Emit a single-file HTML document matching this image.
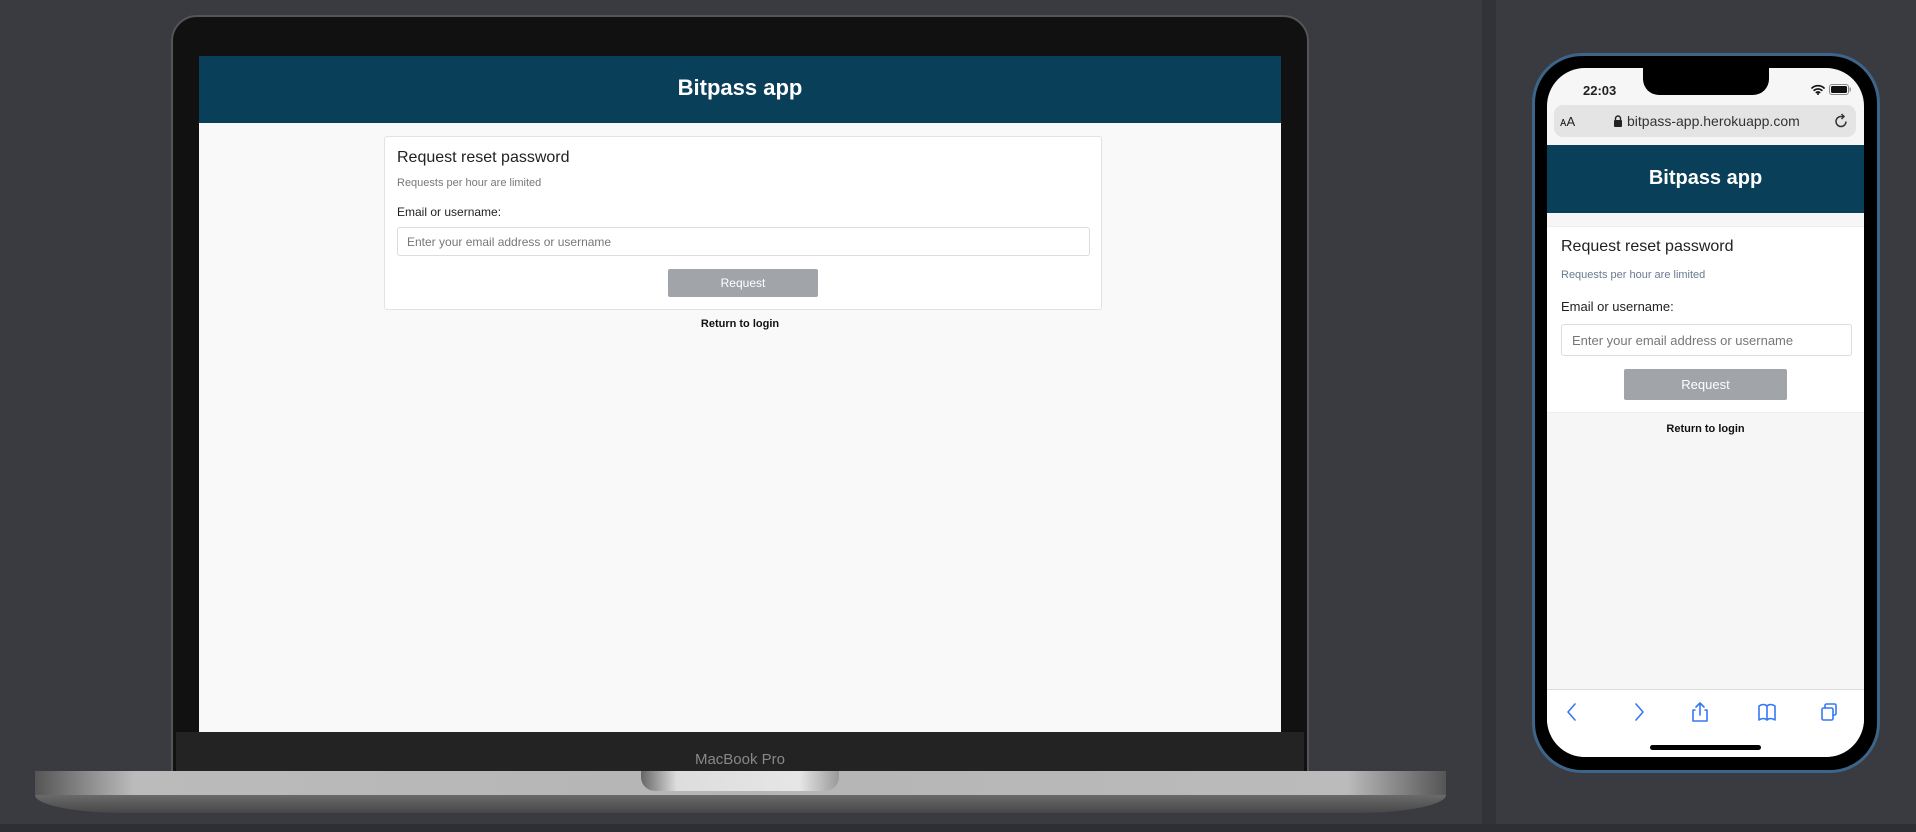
<!DOCTYPE html>
<html><head><meta charset="utf-8"><style>
*{margin:0;padding:0;box-sizing:border-box}
body{width:1916px;height:832px;background:#3a3b40;position:relative;overflow:hidden;font-family:"Liberation Sans",sans-serif}
.abs{position:absolute}
.lid{left:171px;top:15px;width:1138px;height:760px;background:#111;border:2px solid #555;border-radius:26px 26px 0 0}
.chin{left:176px;top:732px;width:1128px;height:42px;background:#232323}
.screen{left:199px;top:56px;width:1082px;height:676px;background:#f9f9f9}
.hdr{background:#0a3f5a;color:#fff;text-align:center;font-weight:600}
.card{background:#fff;border:1px solid #e3e3e3;border-radius:3px}
.t{color:#222}
.inp{border:1px solid #ddd;border-radius:3px;background:#fff;color:#777}
.btn{background:#a1a5aa;color:#fff;text-align:center;border-radius:2px}
svg{position:absolute}
</style></head><body>
<div class="abs" style="left:1482px;top:0;width:14px;height:832px;background:#323338"></div>
<div class="abs" style="left:0;top:824px;width:1916px;height:8px;background:#2e2f33"></div>

<div class="abs lid"></div>
<div class="abs chin"></div>
<div class="abs" style="left:0;top:751px;width:1480px;text-align:center;font-size:15px;color:#888">MacBook Pro</div>
<div class="abs screen">
  <div class="hdr" style="height:67px;line-height:64px;font-size:22px">Bitpass app</div>
  <div class="abs card" style="left:185px;top:80px;width:718px;height:174px">
    <div class="abs t" style="left:12px;top:12px;font-size:16px">Request reset password</div>
    <div class="abs" style="left:12px;top:40px;font-size:11px;color:#777">Requests per hour are limited</div>
    <div class="abs t" style="left:12px;top:68px;font-size:12px">Email or username:</div>
    <div class="abs inp" style="left:12px;top:90px;width:693px;height:29px;font-size:12px;padding:7px 9px">Enter your email address or username</div>
    <div class="abs btn" style="left:283px;top:132px;width:150px;height:28px;line-height:28px;font-size:12px">Request</div>
  </div>
  <div class="abs" style="left:0;top:262px;width:1082px;text-align:center;font-size:11px;font-weight:bold;color:#111">Return to login</div>
</div>
<div class="abs" style="left:35px;top:771px;width:1411px;height:24px;background:linear-gradient(90deg,#555,#bbb 7%,#b5b5b5 50%,#bbb 93%,#555)"></div>
<div class="abs" style="left:641px;top:771px;width:198px;height:20px;background:linear-gradient(90deg,#666,#ddd 18%,#e6e6e6 80%,#999);border-radius:0 0 14px 14px"></div>
<div class="abs" style="left:35px;top:795px;width:1411px;height:18px;background:linear-gradient(#6a6a6a,#474747);border-radius:0 0 90px 90px/0 0 18px 18px"></div>

<!-- phone -->
<div class="abs" style="left:1532px;top:53px;width:348px;height:720px;border-radius:50px;background:#000;border:3px solid #3d6489"></div>
<div class="abs" style="left:1547px;top:68px;width:317px;height:689px;border-radius:38px;background:#f6f6f6;overflow:hidden">
  <div class="abs" style="left:96px;top:0;width:126px;height:27px;background:#000;border-radius:0 0 16px 16px"></div>
  <div class="abs" style="left:36px;top:15px;font-size:13px;font-weight:bold;color:#222">22:03</div>
  <svg style="left:264px;top:16px" width="14" height="11" viewBox="0 0 14 11"><path d="M1 4a9 9 0 0 1 12 0M3.2 6.3a6 6 0 0 1 7.6 0M5.4 8.5a3 3 0 0 1 3.2 0" stroke="#111" stroke-width="1.7" fill="none" stroke-linecap="round"/><circle cx="7" cy="10" r="1" fill="#111"/></svg>
  <svg style="left:282px;top:16px" width="22" height="11" viewBox="0 0 22 11"><rect x="0.5" y="0.5" width="19" height="10" rx="2.5" fill="none" stroke="#888"/><rect x="2" y="2" width="16" height="7" rx="1.5" fill="#111"/><rect x="20.5" y="3.5" width="1.3" height="4" fill="#888"/></svg>
  <div class="abs" style="left:7px;top:37px;width:302px;height:32px;background:#e4e4e4;border-radius:9px"></div>
  <div class="abs" style="left:13px;top:46px;font-size:13px;color:#222">ᴀA</div>
  <svg style="left:66px;top:47px" width="10" height="12" viewBox="0 0 10 12"><path d="M2.5 5V3.5a2.5 2.5 0 0 1 5 0V5" stroke="#222" stroke-width="1.4" fill="none"/><rect x="1" y="5" width="8" height="7" rx="1" fill="#222"/></svg>
  <div class="abs" style="left:80px;top:45px;font-size:14px;color:#333">bitpass-app.herokuapp.com</div>
  <svg style="left:286px;top:45px" width="16" height="16" viewBox="0 0 16 16"><path d="M13 8.5A5 5 0 1 1 8 3.5h2" stroke="#333" stroke-width="1.5" fill="none"/><path d="M8.5 1l2.5 2.5L8.5 6" stroke="#333" stroke-width="1.5" fill="none"/></svg>
  <div class="abs hdr" style="left:0;top:77px;width:317px;height:68px;line-height:66px;font-size:20px">Bitpass app</div>
  <div class="abs" style="left:0;top:158px;width:317px;height:187px;background:#fff;border-top:1px solid #eee;border-bottom:1px solid #eee">
    <div class="abs t" style="left:14px;top:11px;font-size:16px">Request reset password</div>
    <div class="abs" style="left:14px;top:42px;font-size:11px;color:#6a7a90">Requests per hour are limited</div>
    <div class="abs t" style="left:14px;top:72px;font-size:13px">Email or username:</div>
    <div class="abs inp" style="left:14px;top:97px;width:291px;height:32px;font-size:13px;padding:8px 10px">Enter your email address or username</div>
    <div class="abs btn" style="left:77px;top:142px;width:163px;height:31px;line-height:31px;font-size:13px">Request</div>
  </div>
  <div class="abs" style="left:0;top:355px;width:317px;text-align:center;font-size:11px;font-weight:bold;color:#111">Return to login</div>
  <div class="abs" style="left:0;top:621px;width:317px;height:68px;background:#fff;border-top:1px solid #ddd"></div>
  <svg style="left:16px;top:632px" width="290" height="24" viewBox="0 0 290 24" fill="none" stroke="#3478f6" stroke-width="1.6" stroke-linecap="round" stroke-linejoin="round">
    <path d="M12 4L5 12l7 8"/>
    <path d="M73 4l7 8-7 8"/>
    <path d="M137 3v12M133 7l4-4 4 4M132 10h-2v11h14V10h-2"/>
    <path d="M196 6c3-2 6-2 8 0v14c-2-2-5-2-8 0zM204 6c2-2 5-2 8 0v14c-3-2-6-2-8 0"/>
    <rect x="259" y="8" width="11" height="12" rx="1.5"/><path d="M262 8V5.5A1.5 1.5 0 0 1 263.5 4h8A1.5 1.5 0 0 1 273 5.5v8a1.5 1.5 0 0 1-1.5 1.5H270"/>
  </svg>
  <div class="abs" style="left:103px;top:677px;width:111px;height:5px;background:#000;border-radius:3px"></div>
</div>
</body></html>
